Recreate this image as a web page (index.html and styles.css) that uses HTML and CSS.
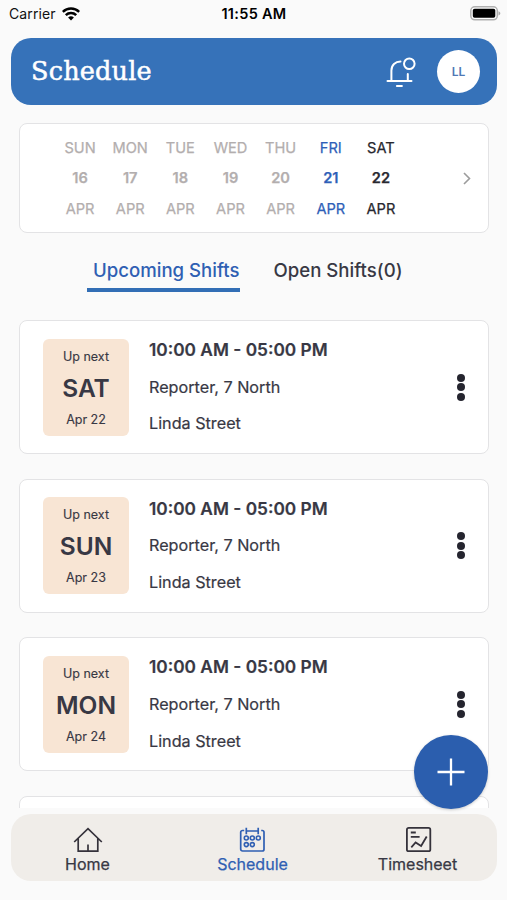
FILE: index.html
```html
<!DOCTYPE html>
<html lang="en">
<head>
<meta charset="utf-8">
<title>Schedule</title>
<link rel="stylesheet" href="styles.css">
</head>
<body>
<div class="phone">
  <div class="status">
    <div class="carrier">
      <span>Carrier</span>
      <svg width="18" height="14" viewBox="0 0 18 14" fill="none" stroke="#000" stroke-width="2.5"><path d="M.8 4.900a11.700 11.700 0 0 1 16.400 0M3.800 8.100a7.400 7.400 0 0 1 10.400 0"/><path d="M9 13.500 6.100 10.600a4.100 4.100 0 0 1 5.800 0z" fill="#000" stroke="none"/></svg>
    </div>
    <div class="clock">11:55 AM</div>
    <div class="battery">
      <svg width="31" height="15" viewBox="0 0 31 15"><rect x=".8" y=".8" width="26.5" height="13" rx="4" fill="#fff" stroke="#b0b0b0" stroke-width="1.5"/><rect x="2.8" y="2.8" width="22.5" height="9" rx="1.8"/><path d="M28.500 5.200c2.400.8 2.400 3.400 0 4.200z" fill="#aaa"/></svg>
    </div>
  </div>

  <header class="header">
    <h1 class="title">Schedule</h1>
    <svg class="bell" width="32" height="32" viewBox="0 0 32 32" fill="none" stroke="#fff" stroke-width="2"><path d="M1.500 24.900h24M5.400 24.500V14.500C5.400 9 9.300 5.500 14.500 5.500M21.800 18v6.500M10.900 29.900h5" stroke-linecap="round"/><circle cx="23.300" cy="7.800" r="5.300"/></svg>
    <div class="avatar">LL</div>
  </header>

  <section class="calendar">
    <div class="days">
      <div class="day past"><span>SUN</span><b>16</b><span>APR</span></div>
      <div class="day past"><span>MON</span><b>17</b><span>APR</span></div>
      <div class="day past"><span>TUE</span><b>18</b><span>APR</span></div>
      <div class="day past"><span>WED</span><b>19</b><span>APR</span></div>
      <div class="day past"><span>THU</span><b>20</b><span>APR</span></div>
      <div class="day today"><span>FRI</span><b>21</b><span>APR</span></div>
      <div class="day"><span>SAT</span><b>22</b><span>APR</span></div>
    </div>
    <svg class="next" width="8" height="13" viewBox="0 0 8 13" fill="none" stroke="#9c9c9c" stroke-width="1.600"><path d="M1 1l5.500 5.500L1 12"/></svg>
  </section>

  <div class="tabs">
    <div class="tab active">Upcoming Shifts</div>
    <div class="tab">Open Shifts(0)</div>
  </div>

  <main class="shifts">
    <article class="shift">
      <div class="date"><span>Up next</span><strong>SAT</strong><span>Apr 22</span></div>
      <div class="info"><b>10:00 AM - 05:00 PM</b><span>Reporter, 7 North</span><span>Linda Street</span></div>
      <div class="more"><i></i><i></i><i></i></div>
    </article>
    <article class="shift">
      <div class="date"><span>Up next</span><strong>SUN</strong><span>Apr 23</span></div>
      <div class="info"><b>10:00 AM - 05:00 PM</b><span>Reporter, 7 North</span><span>Linda Street</span></div>
      <div class="more"><i></i><i></i><i></i></div>
    </article>
    <article class="shift">
      <div class="date"><span>Up next</span><strong>MON</strong><span>Apr 24</span></div>
      <div class="info"><b>10:00 AM - 05:00 PM</b><span>Reporter, 7 North</span><span>Linda Street</span></div>
      <div class="more"><i></i><i></i><i></i></div>
    </article>
    <article class="shift"></article>
  </main>

  <nav class="nav">
    <div class="item">
      <svg width="30" height="26" viewBox="0 0 30 26" fill="none" stroke="#35323b" stroke-width="1.700"><path d="M1.200 15 15 1.700 28.800 15M5.200 11.500v12.700h19.600V11.500M15 17.500v6.700"/></svg>
      <span>Home</span>
    </div>
    <div class="item current">
      <svg width="30" height="26" viewBox="0 0 30 26" fill="none" stroke="#2f5fb3" stroke-width="1.700"><path d="M6.200 3.500H4.500A1.800 1.800 0 0 0 2.700 5.300v16.900A1.800 1.800 0 0 0 4.500 24h19.700a1.800 1.800 0 0 0 1.800-1.800V5.300a1.800 1.800 0 0 0-1.800-1.800h-1M8.500 4h11M8.300.7v6.600M20.200.7v6.600"/><g stroke-width="1.600"><circle cx="8.300" cy="11" r="2"/><circle cx="14.300" cy="11" r="2"/><circle cx="20.300" cy="11" r="2"/><circle cx="8.300" cy="17.600" r="2"/><circle cx="14.300" cy="17.600" r="2"/></g></svg>
      <span>Schedule</span>
    </div>
    <div class="item">
      <svg width="30" height="26" viewBox="0 0 30 26" fill="none" stroke="#35323b" stroke-width="1.800"><rect x="3.900" y=".9" width="23.400" height="23.300" rx="1.800"/><path d="M7.800 5.500h5M7.800 9.800h8.800M8.300 20.300l4.300-4.800 5.500 3.500 5.600-9.500"/></svg>
      <span>Timesheet</span>
    </div>
  </nav>

  <div class="add">
    <svg width="28" height="28" viewBox="0 0 28 28" stroke="#fff" stroke-width="2.300"><path d="M14 .5v27M.5 14h27"/></svg>
  </div>
</div>
</body>
</html>
```

FILE: styles.css
```css
* { box-sizing: border-box; }

body {
  margin: 0;
  background: #fafafa;
  color: #383844;
  font-family: Inter, "Liberation Sans", sans-serif;
}

.phone {
  position: relative;
  display: flex;
  flex-direction: column;
  width: 507px;
  height: 900px;
  padding: 0 10px 0 11px;
  overflow: hidden;
}

svg { display: block; flex: none; }

.status {
  display: grid;
  grid-template-columns: 1fr auto 1fr;
  align-items: center;
  height: 27px;
  margin: 0 -2px;
  flex: none;
  font-size: 14px;
  color: #111;
}

.carrier { display: flex; align-items: center; gap: 6px; letter-spacing: .1px; }
.clock { font-size: 14.500px; font-weight: 600; letter-spacing: .3px; color: #000; }
.battery { display: flex; justify-content: flex-end; margin-right: -2px; }

.header {
  display: flex;
  align-items: center;
  flex: none;
  height: 67px;
  margin-top: 11px;
  padding: 0 17px 0 20px;
  border-radius: 20px;
  background: #3672b9;
}

.title {
  flex: 1;
  margin: -2px 0 0;
  color: #fff;
  font: normal 25.500px/32px "DejaVu Serif", serif;
  letter-spacing: .200px;
  -webkit-text-stroke: .500px;
}

.bell { margin-right: 19px; }

.avatar {
  width: 43px;
  height: 43px;
  border-radius: 50%;
  background: #fff;
  color: #5078b5;
  font-size: 12px;
  font-weight: 600;
  line-height: 43px;
  text-align: center;
}

.calendar {
  display: flex;
  align-items: center;
  justify-content: space-between;
  flex: none;
  height: 110px;
  margin: 18px 8px 0;
  padding: 0 17px 0 35px;
  border: 1.500px solid #e3e3e5;
  border-radius: 8px;
  background: #fff;
}

.days { display: flex; padding-top: 1px; }

.day {
  display: flex;
  flex-direction: column;
  width: 50.150px;
  color: #28282f;
  font-size: 14.600px;
  line-height: 30.500px;
  text-align: center;
  -webkit-text-stroke: .250px;
}

.day b { font-weight: 600; }
.past { color: #b3aeae; }
.today { color: #2f5fb8; }

.tabs {
  display: flex;
  flex: none;
  height: 40px;
  margin: 19px 0 0 76px;
  gap: 34px;
}

.tab {
  height: 40px;
  font-size: 18.600px;
  font-weight: 500;
  line-height: 37px;
}

.active {
  padding-left: 6px;
  border-bottom: 4px solid #326eb5;
  color: #2f5fb3;
}

.shifts {
  display: flex;
  flex-direction: column;
  gap: 24.700px;
  height: 488px;
  margin: 28px 8px 0;
  flex: none;
  overflow: hidden;
}

.shift {
  display: flex;
  align-items: center;
  flex: none;
  height: 134px;
  padding: 0 23px;
  border: 1.500px solid #e3e3e5;
  border-radius: 8px;
  background: #fff;
}

.date {
  display: flex;
  flex-direction: column;
  align-items: center;
  width: 86px;
  height: 97px;
  padding-top: 8px;
  border-radius: 6px;
  background: #f8e5d4;
  font-size: 12.500px;
  line-height: 20px;
  -webkit-text-stroke: .150px;
}

.date strong {
  margin: 6px 0 7px;
  font-size: 24.500px;
  font-weight: 600;
  line-height: 30px;
  -webkit-text-stroke: 0;
}

.info {
  display: flex;
  flex-direction: column;
  flex: 1;
  margin-left: 20px;
  font-size: 16.200px;
  line-height: 36.700px;
  -webkit-text-stroke: .200px;
}

.info b { font-size: 17.300px; font-weight: 600; }

.more { display: flex; flex-direction: column; gap: 1.500px; }
.more i { width: 8px; height: 8px; border-radius: 50%; background: #25252f; }

.nav {
  display: grid;
  grid-template-columns: repeat(3, 165px);
  justify-content: center;
  flex: none;
  height: 67px;
  margin-top: 6px;
  padding-right: 3px;
  border-radius: 20px;
  background: #f0ede9;
}

.item {
  display: flex;
  flex-direction: column;
  align-items: center;
  padding-top: 13px;
  font-size: 16px;
  line-height: 20px;
  -webkit-text-stroke: .250px;
}

.item span { margin-top: 1px; }
.current { color: #2f5fb3; }

.add {
  position: absolute;
  left: 414px;
  top: 735px;
  display: grid;
  place-items: center;
  width: 74px;
  height: 74px;
  border-radius: 50%;
  background: #2b5eae;
  box-shadow: 0 1px 3px rgba(0, 0, 0, .2);
}
```
